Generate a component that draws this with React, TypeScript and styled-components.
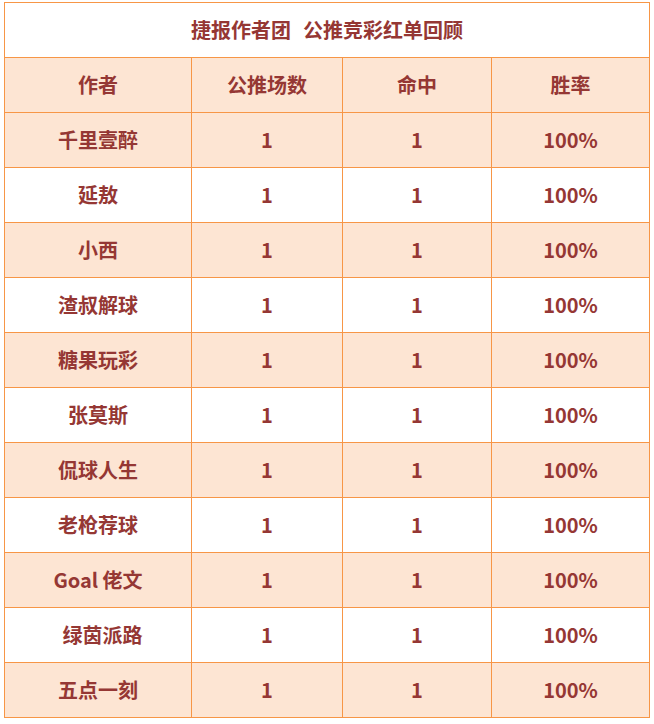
import React from 'react';
import styled, { createGlobalStyle } from 'styled-components';

const GlobalStyle = createGlobalStyle`
  html, body {
    margin: 0;
    padding: 0;
    background: #ffffff;
  }
  body {
    font-family: "Noto Sans CJK SC", "Noto Sans", sans-serif;
  }
`;

const Page = styled.div`
  padding: 2px 0 0 4px;
`;

const Table = styled.table`
  width: 645px;
  border-collapse: collapse;
  table-layout: fixed;
  color: #953734;
  font-size: 20px;
  font-weight: 700;
`;

const Row = styled.tr<{ $shaded?: boolean }>`
  height: 55px;
  background: ${(p) => (p.$shaded ? '#fde5d3' : '#ffffff')};
`;

const Cell = styled.td`
  border: 1px solid #f79646;
  text-align: center;
  vertical-align: middle;
  padding: 0;
  line-height: 1;
  white-space: pre;
`;

const HeadCell = styled(Cell).attrs({ as: 'th' })`
  font-weight: 700;
`;

const TitleWrap = styled.div`
  display: flex;
  justify-content: center;
  gap: 12px;
`;

interface Pick {
  name: string;
  total: number;
  hits: number;
}

const picks: Pick[] = [
  { name: '千里壹醉', total: 1, hits: 1 },
  { name: '延敖', total: 1, hits: 1 },
  { name: '小西', total: 1, hits: 1 },
  { name: '渣叔解球', total: 1, hits: 1 },
  { name: '糖果玩彩', total: 1, hits: 1 },
  { name: '张莫斯', total: 1, hits: 1 },
  { name: '侃球人生', total: 1, hits: 1 },
  { name: '老枪荐球', total: 1, hits: 1 },
  { name: 'Goal 佬文', total: 1, hits: 1 },
  { name: '  绿茵派路', total: 1, hits: 1 },
  { name: '五点一刻', total: 1, hits: 1 },
];

const App: React.FC = () => {
  return (
    <Page>
      <GlobalStyle />
      <Table>
        <colgroup>
          <col style={{ width: 187 }} />
          <col style={{ width: 151 }} />
          <col style={{ width: 149 }} />
          <col style={{ width: 158 }} />
        </colgroup>
        <thead>
          <Row>
            <HeadCell colSpan={4}>
              <TitleWrap>
                <span>捷报作者团</span>
                <span>公推竞彩红单回顾</span>
              </TitleWrap>
            </HeadCell>
          </Row>
          <Row $shaded>
            <HeadCell>作者</HeadCell>
            <HeadCell>公推场数</HeadCell>
            <HeadCell>命中</HeadCell>
            <HeadCell>胜率</HeadCell>
          </Row>
        </thead>
        <tbody>
          {picks.map((p, i) => (
            <Row key={p.name} $shaded={i % 2 === 0}>
              <Cell>{p.name}</Cell>
              <Cell>{p.total}</Cell>
              <Cell>{p.hits}</Cell>
              <Cell>{Math.round((p.hits / p.total) * 100)}%</Cell>
            </Row>
          ))}
        </tbody>
      </Table>
    </Page>
  );
};

export default App;
